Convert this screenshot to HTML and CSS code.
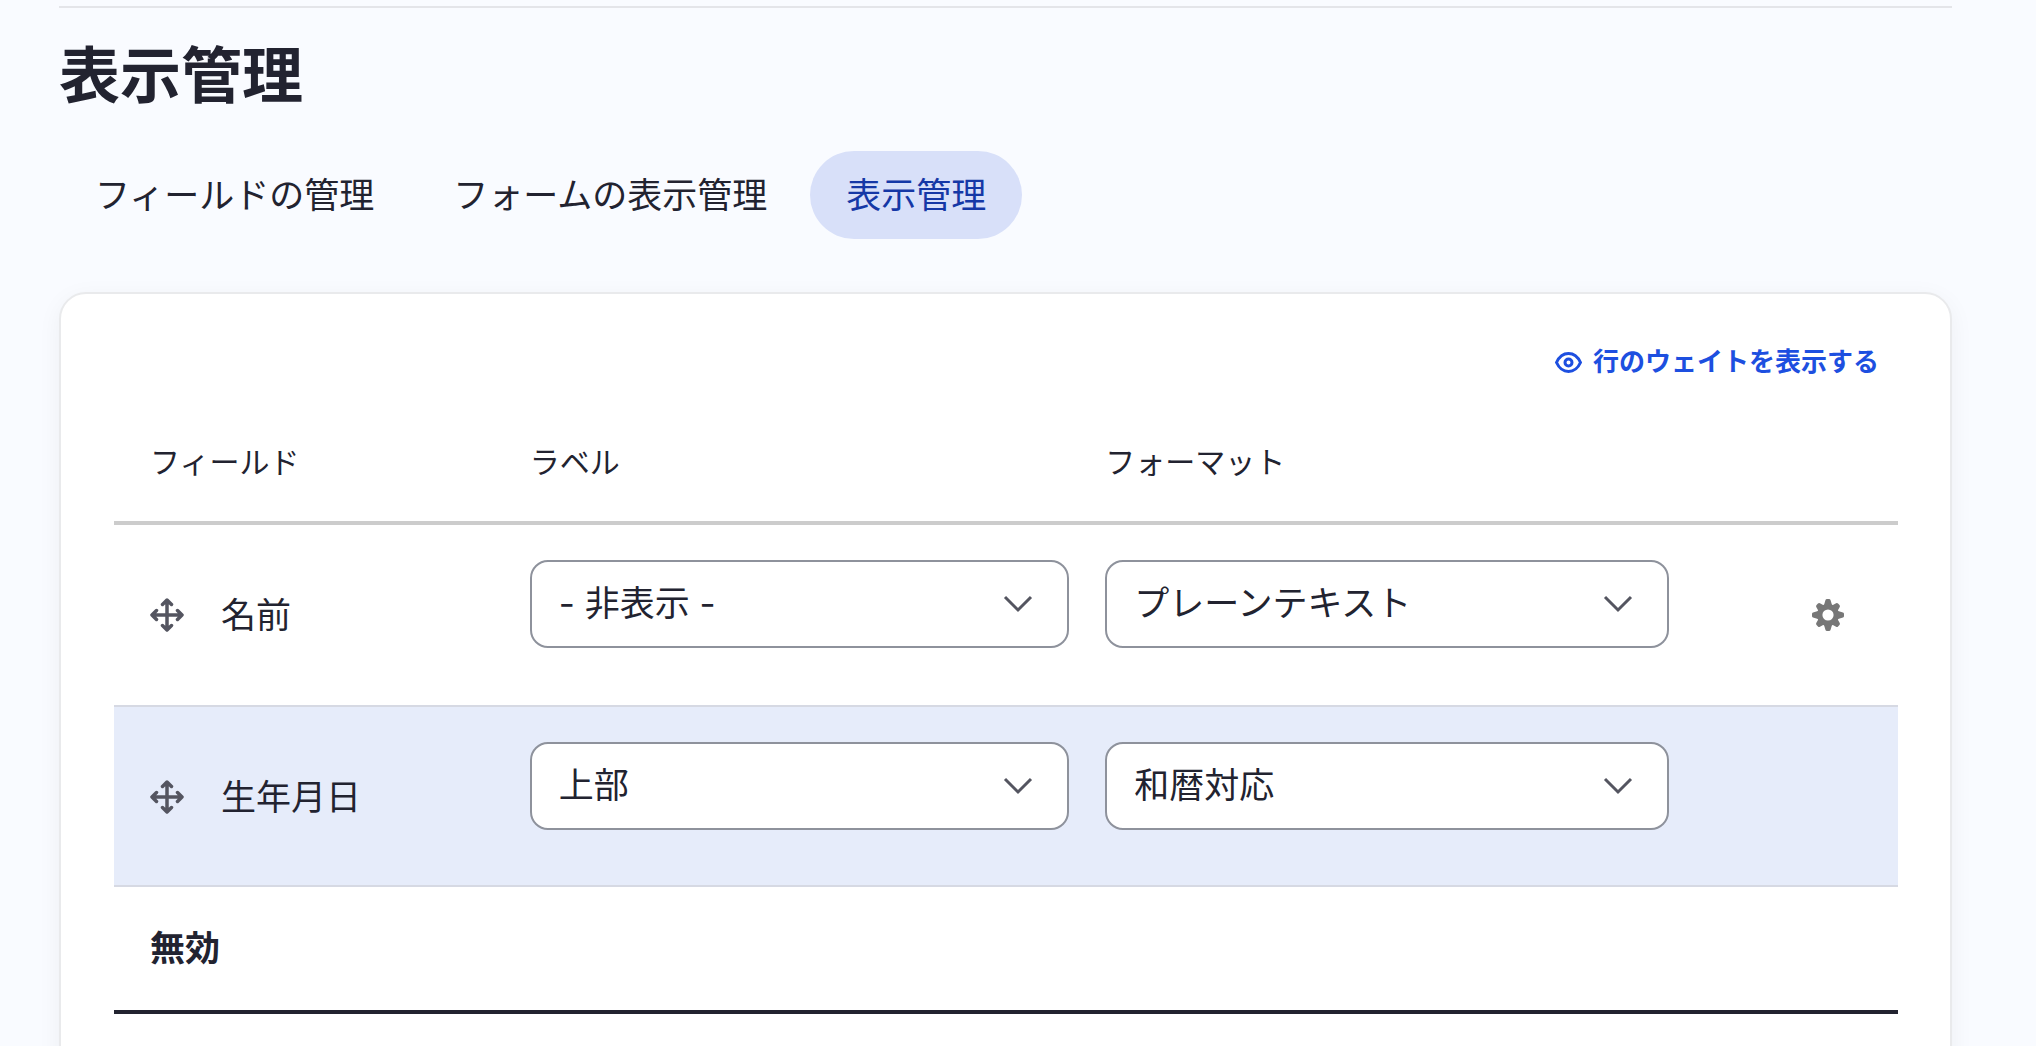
FILE: index.html
```html
<!doctype html>
<html lang="ja">
<head>
	<meta charset="UTF-8">
	<title>表示管理</title>
	<link rel="stylesheet" href="styles.css">
</head>
<body>
<svg class="sprite">
	<symbol id="icon-move" viewBox="0 0 34 34">
		<path d="M17 3v28M3 17h28M12.5 6.5 17 2l4.500 4.500M12.500 27.500 17 32l4.500-4.500M6.500 12.500 2 17l4.500 4.500M27.500 12.500 32 17l-4.500 4.500" fill="none" stroke="currentColor" stroke-width="3.500" stroke-linecap="round" stroke-linejoin="round"/>
	</symbol>
</svg>
<main class="page">
	<h1 class="title">表示管理</h1>
	<nav class="tabs">
		<a class="tab" href="#fields">フィールドの管理</a>
		<a class="tab" href="#form-display">フォームの表示管理</a>
		<a class="tab tab-active" href="#display" aria-current="page">表示管理</a>
	</nav>
	<form class="card">
		<div class="toolbar">
			<button class="weight-toggle" type="button">
				<svg class="icon-eye" viewBox="0 0 27 21" fill="none" stroke="currentColor" stroke-width="3">
					<path d="M1.500 10.500C4 5 8 1.500 13.500 1.500S23 5 25.500 10.500C23 16 19 19.500 13.500 19.500S4 16 1.500 10.500z" stroke-linejoin="round"/>
					<circle cx="13.500" cy="10.500" r="3.500"/>
				</svg>
				行のウェイトを表示する
			</button>
		</div>
		<table class="fields">
			<thead>
				<tr>
					<th class="col-field">フィールド</th>
					<th class="col-label">ラベル</th>
					<th class="col-format">フォーマット</th>
					<th class="col-settings"></th>
				</tr>
			</thead>
			<tbody>
				<tr>
					<td>
						<div class="field-name">
							<a class="handle" href="#move" aria-label="移動"><svg><use href="#icon-move"/></svg></a>
							名前
						</div>
					</td>
					<td>
						<select class="select" aria-label="名前のラベル">
							<option>- 非表示 -</option>
							<option>上部</option>
						</select>
					</td>
					<td>
						<select class="select" aria-label="名前のフォーマット">
							<option>プレーンテキスト</option>
						</select>
					</td>
					<td class="settings">
						<button class="gear" type="button" aria-label="設定">
							<svg viewBox="-16 -16 32 32" fill="currentColor">
								<path fill-rule="evenodd" d="M0-11A11 11 0 1 1 0 11 11 11 0 1 1 0-11zM0-5.600A5.600 5.600 0 1 0 0 5.600 5.600 5.600 0 1 0 0-5.600z"/>
								<path d="M-4-10-2.500-15Q-2.200-16-1-16H1Q2.200-16 2.500-15L4-10zM-4 10-2.500 15Q-2.200 16-1 16H1Q2.200 16 2.500 15L4 10zM-10-4-15-2.500Q-16-2.200-16-1V1Q-16 2.200-15 2.500L-10 4zM10-4 15-2.500Q16-2.200 16-1V1Q16 2.200 15 2.500L10 4z"/>
								<path d="M-4-9-2.600-14Q-2.200-15.200-1-15.200H1Q2.200-15.200 2.600-14L4-9zM-4 9-2.600 14Q-2.200 15.200-1 15.200H1Q2.200 15.200 2.600 14L4 9zM-9-4-14-2.600Q-15.200-2.200-15.200-1V1Q-15.200 2.200-14 2.600L-9 4zM9-4 14-2.600Q15.200-2.200 15.200-1V1Q15.200 2.200 14 2.600L9 4z" transform="rotate(45)"/>
							</svg>
						</button>
					</td>
				</tr>
				<tr class="row-hover">
					<td>
						<div class="field-name">
							<a class="handle" href="#move" aria-label="移動"><svg><use href="#icon-move"/></svg></a>
							生年月日
						</div>
					</td>
					<td>
						<select class="select" aria-label="生年月日のラベル">
							<option>上部</option>
							<option>- 非表示 -</option>
						</select>
					</td>
					<td>
						<select class="select" aria-label="生年月日のフォーマット">
							<option>和暦対応</option>
						</select>
					</td>
					<td></td>
				</tr>
				<tr class="region">
					<th colspan="4">無効</th>
				</tr>
			</tbody>
		</table>
	</form>
</main>
</body>
</html>
```

FILE: styles.css
```css
*{
	box-sizing:border-box;
}
body{
	margin:0;
	padding:6px 84px 0 59px;
	overflow:hidden;
	background-color:#f9fbff;
	color:#222330;
	font-family:Inter, "Noto Sans CJK JP", sans-serif;
	font-size:35px;
}
.sprite{
	display:none;
}
.page{
	border-top:2px solid #e4e5e9;
}
.title{
	margin:32px 0 39px;
	font-size:61px;
	line-height:72px;
	font-weight:bold;
}

/*tabs*/
.tabs{
	display:flex;
	gap:7px;
}
.tab{
	padding:18px 36px;
	border-radius:44px;
	line-height:52px;
	color:#222330;
	text-decoration:none;
}
.tab-active{
	background-color:#d8e0f9;
	color:#1538a6;
}

/*card*/
.card{
	margin-top:53px;
	padding:50px 52px 80px 53px;
	background-color:#fff;
	border:2px solid #e9eaec;
	border-radius:27px;
	box-shadow:0 6px 24px rgba(34,35,48,.05);
}
.toolbar{
	display:flex;
	justify-content:flex-end;
	padding-right:19px;
}
.weight-toggle{
	display:flex;
	align-items:center;
	gap:11px;
	padding:0;
	border:0;
	background:none;
	color:#1d4fe0;
	font:bold 26px/36px Inter, "Noto Sans CJK JP", sans-serif;
	cursor:pointer;
}
.icon-eye{
	width:27px;
	height:21px;
}

/*table*/
.fields{
	width:100%;
	margin-top:40px;
	border-collapse:separate;
	border-spacing:0;
	table-layout:fixed;
}
.fields th,
.fields td{
	padding:35px 18px;
	text-align:left;
}
.fields th:first-child,
.fields td:first-child{
	padding-left:36px;
}
.col-field{
	width:22.3%;
}
.col-label{
	width:32.25%;
}
.col-format{
	width:33.6%;
}
.fields thead th{
	padding-top:20px;
	padding-bottom:37px;
	border-bottom:4px solid #ccc;
	font-size:30px;
	line-height:44px;
	font-weight:normal;
}
.fields td{
	border-bottom:2px solid #d6d9e3;
}
.row-hover{
	background-color:#e6ecfa;
}
.fields .row-hover td{
	padding-bottom:33px;
}
.field-name{
	display:flex;
	align-items:center;
	gap:37px;
	line-height:52px;
}
.handle{
	display:flex;
	color:#545560;
}
.handle svg{
	width:34px;
	height:34px;
}
.select{
	display:block;
	width:100%;
	height:88px;
	margin-bottom:22px;
	padding:0 80px 2px 27px;
	border:2px solid #8e929c;
	border-radius:18px;
	appearance:none;
	background:#fff url("data:image/svg+xml,%3Csvg xmlns='http://www.w3.org/2000/svg' width='30' height='18' fill='none' stroke='%23545560' stroke-width='3'%3E%3Cpath d='M2 2l13 13L28 2'/%3E%3C/svg%3E") no-repeat right 34px center;
	color:#222330;
	font:35px Inter, "Noto Sans CJK JP", sans-serif;
}
.fields .settings{
	padding-right:36px;
	text-align:right;
}
.gear{
	display:inline-flex;
	padding:18px;
	border:0;
	background:none;
	color:#777;
	cursor:pointer;
}
.gear svg{
	width:32px;
	height:32px;
}
.fields .region th{
	padding-top:35px;
	padding-bottom:36px;
	border-bottom:4px solid #222330;
	line-height:52px;
}
```
